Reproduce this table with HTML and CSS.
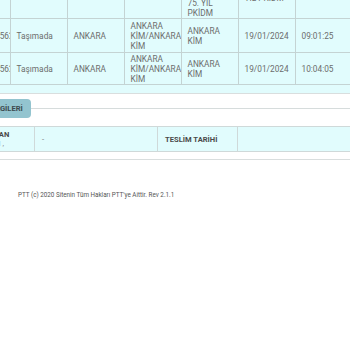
FILE: index.html
```html
<!DOCTYPE html>
<html lang="tr">
<head>
<meta charset="utf-8">
<link rel="stylesheet" href="styles.css">
</head>
<body>
<div class="shift">
  <div class="grid-wrap">
    <table class="list">
      <colgroup>
        <col class="c"><col class="c"><col class="c"><col class="c"><col class="c"><col class="c"><col class="c">
      </colgroup>
      <tr class="r1">
        <td></td>
        <td></td>
        <td></td>
        <td></td>
        <td>ANKARA<br>KİM/ANKARA<br>KİM/ANKARA<br>75. YIL<br>PKİDM</td>
        <td>ANKARA 75.<br>YIL PKİDM</td>
        <td></td>
      </tr>
      <tr class="r2">
        <td><span class="clip">1234567562</span></td>
        <td>Taşımada</td>
        <td>ANKARA</td>
        <td>ANKARA<br>KİM/ANKARA<br>KİM</td>
        <td>ANKARA<br>KİM</td>
        <td>19/01/2024</td>
        <td>09:01:25</td>
      </tr>
      <tr class="r3">
        <td><span class="clip">1234567562</span></td>
        <td>Taşımada</td>
        <td>ANKARA</td>
        <td>ANKARA<br>KİM/ANKARA<br>KİM</td>
        <td>ANKARA<br>KİM</td>
        <td>19/01/2024</td>
        <td>10:04:05</td>
      </tr>
    </table>
  </div>

  <div class="section">
    <div class="tabbar">
      <span class="tab">GÖNDERİ BİLGİLERİ</span>
      <span class="rule"></span>
    </div>
    <table class="info">
      <tr>
        <th class="k1">TESLİM ALAN<br><span class="sub">ADI SOYADI ,</span></th>
        <td class="v1">-</td>
        <th class="k2">TESLİM TARİHİ</th>
        <td class="v2"></td>
      </tr>
    </table>
  </div>
</div>

<footer class="foot">PTT (c) 2020 Sitenin Tüm Hakları PTT'ye Aittir. Rev 2.1.1</footer>
</body>
</html>
```

FILE: styles.css
```css
html, body {
  margin: 0;
  padding: 0;
  background: #ffffff;
  overflow: hidden;
}

body {
  width: 350px;
  height: 350px;
  font-family: Roboto, "Liberation Sans", sans-serif;
  color: #6c6c6c;
}

.shift {
  margin-left: -47px;
  margin-top: -33px;
  width: 460px;
}

.grid-wrap {
  background: #e1fcfd;
  padding-bottom: 8px;
  border-bottom: 1px solid #d9dede;
}

.list {
  border-collapse: collapse;
  table-layout: fixed;
  width: 399px;
  font-size: 8.3px;
  line-height: 10px;
}

.list .c {
  width: 57px;
}

.list td {
  border: 1px solid #c4d3d3;
  border-top: none;
  padding: 1px 2px 0 6px;
  vertical-align: middle;
  overflow: hidden;
  white-space: nowrap;
}

.list td:first-child {
  border-left: none;
}

.r1 td { height: 50px; }
.r2 td { height: 32px; }
.r3 td { height: 29px; }

.clip {
  display: block;
  overflow: hidden;
  white-space: nowrap;
  padding-left: 8px;
  margin-right: -10px;
}

.section {
  padding-top: 5px;
  border-bottom: 1px solid #d9dede;
  padding-bottom: 7px;
}

.tabbar {
  display: flex;
  align-items: center;
}

.tab {
  background: #93c4cf;
  color: #3c4a4e;
  font-weight: 700;
  font-size: 7.6px;
  height: 19px;
  line-height: 19px;
  padding: 0 8px 0 2px;
  border-radius: 4px;
  white-space: nowrap;
}

.rule {
  flex: 1;
  height: 1px;
  background: #d6dcdc;
}

.info {
  margin-top: 8px;
  border-collapse: collapse;
  table-layout: fixed;
  width: 460px;
  background: #e1fcfd;
  font-size: 7.6px;
  line-height: 9px;
}

.info th, .info td {
  border-top: 1px solid #cfd9d9;
  border-bottom: 1px solid #cfd9d9;
  border-right: 1px solid #cfd9d9;
  height: 24px;
  padding: 0 7px;
  text-align: left;
  vertical-align: middle;
}

.info th {
  color: #4a4a4a;
  font-weight: 700;
  white-space: nowrap;
}

.info .k1 { width: 66px; padding-left: 8px; }
.info .v1 { width: 108px; color: #777; }
.info .k2 { width: 65px; }

.sub {
  font-weight: 400;
  color: #888;
}

.foot {
  margin-top: 31px;
  padding-left: 18px;
  font-size: 6.3px;
  color: #555;
}
```
